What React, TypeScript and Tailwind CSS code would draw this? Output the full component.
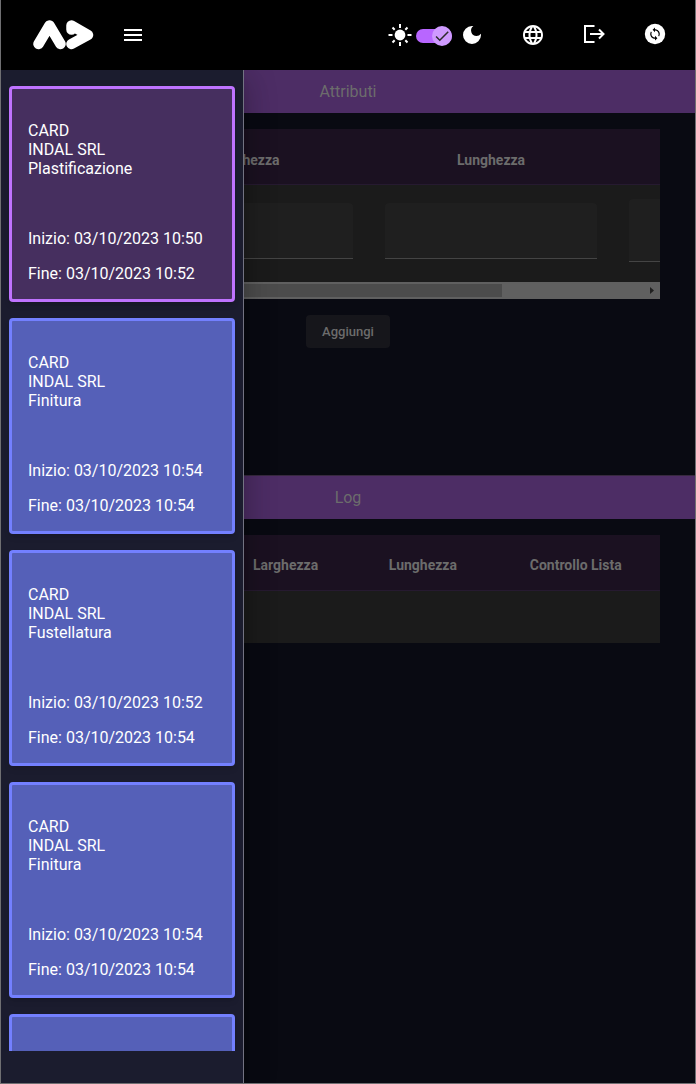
import type { ReactNode } from "react";
import { MdCheck, MdDarkMode, MdLanguage, MdMenu } from "react-icons/md";

type Job = {
  phase: string;
  start: string;
  end: string;
  active?: boolean;
};

const jobs: Job[] = [
  { phase: "Plastificazione", start: "03/10/2023 10:50", end: "03/10/2023 10:52", active: true },
  { phase: "Finitura", start: "03/10/2023 10:54", end: "03/10/2023 10:54" },
  { phase: "Fustellatura", start: "03/10/2023 10:52", end: "03/10/2023 10:54" },
  { phase: "Finitura", start: "03/10/2023 10:54", end: "03/10/2023 10:54" },
  { phase: "", start: "", end: "" },
];

function Logo() {
  return (
    <svg viewBox="0 0 62 32" className="h-8 w-[62px]" aria-hidden="true">
      <g fill="none" stroke="white" strokeWidth="10.5" strokeLinecap="round" strokeLinejoin="round">
        <path d="M6.500 25 17.500 6.500 28.500 25" />
        <path d="M39.500 10.500V6.500L56 16 39.500 25" />
      </g>
    </svg>
  );
}

function SunIcon() {
  return (
    <svg viewBox="0 0 24 24" className="size-6" aria-hidden="true">
      <circle cx="12" cy="12" r="5.4" fill="currentColor" />
      <path
        d="M12 1v4M12 19v4M.500 12h4M19.500 12h4M4.500 4.500l2.200 2.200M17.300 17.300l2.200 2.200M4.500 19.500l2.200-2.200M17.300 6.700l2.200-2.200"
        stroke="currentColor"
        strokeWidth="2"
      />
    </svg>
  );
}

function ExitIcon() {
  return (
    <svg viewBox="0 0 24 24" className="size-6" fill="none" stroke="currentColor" strokeWidth="2" aria-hidden="true">
      <path d="M12.500 3H3v16h9.500" />
      <path d="M8 11H21.500M17 6.500 21.500 11 17 15.500" />
    </svg>
  );
}

function SyncIcon() {
  return (
    <svg viewBox="0 0 24 24" className="size-6" aria-hidden="true">
      <circle cx="12" cy="11" r="10.200" fill="currentColor" />
      <path
        transform="translate(4.800 3.800) scale(0.6)"
        d="M12 4V1L8 5l4 4V6c3.310 0 6 2.690 6 6 0 1.010-.25 1.970-.7 2.800l1.460 1.460C19.540 15.030 20 13.570 20 12c0-4.420-3.580-8-8-8zm0 14c-3.310 0-6-2.690-6-6 0-1.010.25-1.970.7-2.800L5.240 7.740C4.460 8.970 4 10.430 4 12c0 4.420 3.580 8 8 8v3l4-4-4-4v3z"
        fill="black"
      />
    </svg>
  );
}

function IconButton({ label, children }: { label: string; children: ReactNode }) {
  return (
    <button type="button" aria-label={label} className="flex size-6 items-center justify-center text-white">
      {children}
    </button>
  );
}

function Header() {
  return (
    <header className="flex h-[70px] shrink-0 items-center bg-black pr-7 pl-[31px]">
      <Logo />
      <div className="ml-[27px]">
        <IconButton label="Menu">
          <MdMenu size={24} />
        </IconButton>
      </div>
      <div className="ml-auto flex items-center gap-[37px]">
        <label className="flex items-center text-white">
          <SunIcon />
          <input type="checkbox" defaultChecked aria-label="Tema scuro" className="sr-only" />
          <span className="mt-0.5 ml-1 flex h-[14px] w-9 items-center justify-end rounded-full bg-[#b866ff]">
            <span className="flex size-5 shrink-0 items-center justify-center rounded-full bg-[#cf9aff] text-[#2b2b2b]">
              <MdCheck size={18} />
            </span>
          </span>
          <MdDarkMode size={24} className="ml-2" />
        </label>
        <IconButton label="Lingua">
          <MdLanguage size={24} />
        </IconButton>
        <IconButton label="Esci">
          <ExitIcon />
        </IconButton>
        <IconButton label="Aggiorna">
          <SyncIcon />
        </IconButton>
      </div>
    </header>
  );
}

function JobCard({ job }: { job: Job }) {
  return (
    <li
      className={
        job.active
          ? "h-[216px] shrink-0 rounded border-[3px] border-[#bf73ff] bg-[#462f5f] px-4 pt-8 shadow-md"
          : "h-[216px] shrink-0 rounded border-[3px] border-[#7380ff] bg-[#5560b8] px-4 pt-8 shadow-md"
      }
    >
      {job.phase && (
        <>
          <p className="leading-[19px]">
            CARD
            <br />
            INDAL SRL
            <br />
            {job.phase}
          </p>
          <p className="mt-[51px] leading-[19px]">Inizio: {job.start}</p>
          <p className="mt-4 leading-[19px]">Fine: {job.end}</p>
        </>
      )}
    </li>
  );
}

function SectionTitle({ children }: { children: ReactNode }) {
  return (
    <h2 className="flex h-[43px] items-center justify-center bg-[#4d2d65] text-base text-[#6c6c6c]">
      {children}
    </h2>
  );
}

function AttributesTable() {
  return (
    <div className="mx-[35px] mt-4 bg-[#1b1b1b]">
      <div className="overflow-hidden pb-[5px]">
        <table className="w-[821px] table-fixed border-collapse">
          <thead className="h-[55px] border-b border-[#261a30] bg-[#1b1121] text-sm text-[#6c6c6c]">
            <tr>
              <td className="w-[89px]" />
              <th className="w-[244px] pt-2 font-bold">Larghezza</th>
              <th className="w-[244px] pt-2 font-bold">Lunghezza</th>
              <td className="w-[244px]" />
            </tr>
          </thead>
          <tbody>
            <tr className="h-[93px]">
              <td />
              <td className="px-4">
                <input
                  aria-label="Larghezza"
                  className="block h-14 w-full rounded-t border-b border-[#444] bg-[#1f1f1f] px-3 text-[#6c6c6c]"
                />
              </td>
              <td className="px-4">
                <input
                  aria-label="Lunghezza"
                  className="block h-14 w-full rounded-t border-b border-[#444] bg-[#1f1f1f] px-3 text-[#6c6c6c]"
                />
              </td>
              <td className="px-4">
                <input
                  aria-label="Controllo Lista"
                  className="block h-[63px] w-full rounded-t border-b border-[#444] bg-[#1f1f1f] px-3 text-[#6c6c6c]"
                />
              </td>
            </tr>
          </tbody>
        </table>
      </div>
      <div className="flex h-[17px] items-center bg-[#606060] pr-1.5 pl-[17px]">
        <div className="h-[13px] w-[449px] bg-[#4c4c4c]" />
        <svg viewBox="0 0 4 7" className="ml-auto h-[7px] w-1" aria-hidden="true">
          <path d="M0 0 4 3.500 0 7z" fill="#202020" />
        </svg>
      </div>
    </div>
  );
}

function LogTable() {
  return (
    <div className="mx-[35px] mt-4">
      <table className="w-full table-fixed border-collapse bg-[#1b1b1b]">
        <thead className="h-[55px] border-b border-[#261a30] bg-[#1b1121] text-sm text-[#6c6c6c]">
          <tr>
            <td className="w-[29%]" />
            <th className="w-[22%] pt-1.5 font-bold">Larghezza</th>
            <th className="w-[22%] pt-1.5 font-bold">Lunghezza</th>
            <th className="w-[27%] pt-1.5 font-bold">Controllo Lista</th>
          </tr>
        </thead>
        <tbody>
          <tr className="h-[53px]">
            <td colSpan={4} />
          </tr>
        </tbody>
      </table>
    </div>
  );
}

export default function App() {
  return (
    <div className="flex h-screen flex-col overflow-hidden border-x border-b border-[#6f6f72] bg-[#090a12] font-[Roboto,sans-serif]">
      <Header />
      <div className="relative min-h-0 flex-1">
        <main className="h-full">
          <section className="h-[405px]">
            <SectionTitle>Attributi</SectionTitle>
            <AttributesTable />
            <div className="mt-4 flex justify-center">
              <button
                type="button"
                className="h-[33px] rounded bg-[#16161b] px-4 text-[13px] font-medium text-[#6c6c6c]"
              >
                Aggiungi
              </button>
            </div>
          </section>
          <section className="border-t border-[#37293f]">
            <SectionTitle>Log</SectionTitle>
            <LogTable />
          </section>
        </main>
        <aside className="absolute inset-y-0 left-0 w-[243px] border-r border-[#737382] bg-[#1b1c2e] pb-8 text-white shadow-[0_8px_10px_-5px_rgba(0,0,0,0.2),0_16px_24px_2px_rgba(0,0,0,0.14),0_6px_30px_5px_rgba(0,0,0,0.12)]">
          <ul className="flex h-full flex-col gap-4 overflow-hidden px-2 pt-4">
            {jobs.map((job, i) => (
              <JobCard key={i} job={job} />
            ))}
          </ul>
        </aside>
      </div>
    </div>
  );
}
